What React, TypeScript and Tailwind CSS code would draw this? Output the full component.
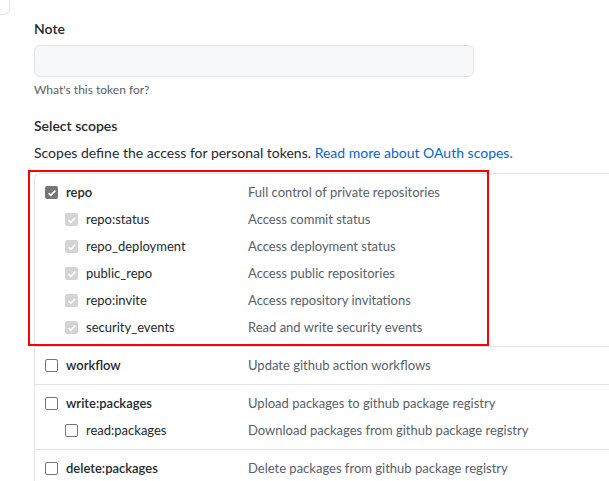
import React from "react";

type Scope = { name: string; desc: string; checked?: boolean; sub?: boolean };

const groups: Scope[][] = [
  [
    { name: "repo", desc: "Full control of private repositories", checked: true },
    { name: "repo:status", desc: "Access commit status", checked: true, sub: true },
    { name: "repo_deployment", desc: "Access deployment status", checked: true, sub: true },
    { name: "public_repo", desc: "Access public repositories", checked: true, sub: true },
    { name: "repo:invite", desc: "Access repository invitations", checked: true, sub: true },
    { name: "security_events", desc: "Read and write security events", checked: true, sub: true },
  ],
  [{ name: "workflow", desc: "Update github action workflows" }],
  [
    { name: "write:packages", desc: "Upload packages to github package registry" },
    { name: "read:packages", desc: "Download packages from github package registry", sub: true },
  ],
  [{ name: "delete:packages", desc: "Delete packages from github package registry" }],
];

function Check({ checked, sub }: { checked?: boolean; sub?: boolean }) {
  if (!checked) {
    return <span className="w-[13px] h-[13px] rounded-[2px] border border-[#767676] bg-white shrink-0" />;
  }
  return (
    <span
      className={`w-[13px] h-[13px] rounded-[2px] shrink-0 flex items-center justify-center ${
        sub ? "bg-[#d4d4d4]" : "bg-[#767676]"
      }`}
    >
      <svg viewBox="0 0 12 12" className="w-[10px] h-[10px]" fill="none" stroke="white" strokeWidth={2}>
        <path d="M2 6.2l2.6 2.6L10 3.2" />
      </svg>
    </span>
  );
}

function Row({ s }: { s: Scope }) {
  return (
    <div className="flex items-center h-[27px]">
      <div className={`flex items-center w-[203px] ${s.sub ? "pl-[20px]" : ""}`}>
        <Check checked={s.checked} sub={s.sub} />
        <span className={`ml-[8px] ${s.sub ? "" : "font-semibold"}`}>{s.name}</span>
      </div>
      <span className="text-[#586069] whitespace-nowrap">{s.desc}</span>
    </div>
  );
}

export default function App() {
  return (
    <div
      className="relative w-[609px] h-[481px] overflow-hidden bg-white text-[#24292e] text-[14px] leading-[21px]"
      style={{ fontFamily: 'Lato, "Liberation Sans", Arial, sans-serif' }}
    >
      {/* corner of neighbouring panel */}
      <div className="absolute left-0 top-0 w-[10px] h-[15px] border-r border-b border-[#e1e4e8] rounded-br-[6px]" />

      <div className="pt-[18px] pl-[34px]">
        <div className="font-semibold">Note</div>
        <div className="mt-[6px] w-[440px] h-[32px] rounded-[6px] border border-[#e1e4e8] bg-[#f6f8fa]" />
        <div className="mt-[4px] text-[12px] leading-[18px] text-[#586069]">What's this token for?</div>
        <div className="mt-[16px] font-semibold">Select scopes</div>
        <div className="mt-[6px]">
          Scopes define the access for personal tokens.{" "}
          <span className="text-[#0366d6]">Read more about OAuth scopes.</span>
        </div>

        <div className="mt-[10px] w-[700px] border-l border-t border-[#e1e4e8] rounded-tl-[6px] text-[13px]">
          {groups.map((g, i) => (
            <div key={i} className={`pl-[10px] py-[5px] ${i > 0 ? "border-t border-[#e1e4e8]" : ""}`}>
              {g.map((s) => (
                <Row key={s.name} s={s} />
              ))}
            </div>
          ))}
        </div>
      </div>

      {/* annotation highlight */}
      <div className="absolute left-[28px] top-[170px] w-[461px] h-[176px] border-2 border-[#ff0000]" />
    </div>
  );
}
